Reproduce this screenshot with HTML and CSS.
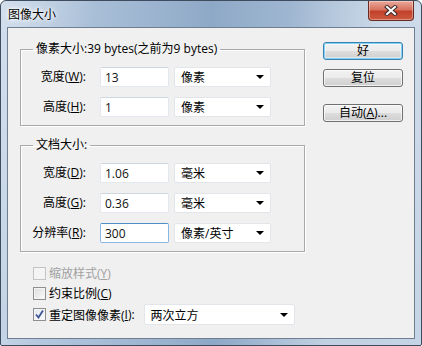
FILE: index.html
```html
<!DOCTYPE html>
<html>
<head>
  <meta charset="UTF-8">
  <link rel="stylesheet" href="styles.css">
</head>
<body>
  <div class="window">
    <div class="titlebar">
      <span class="title">图像大小</span>
      <button class="close" title="关闭">
        <svg width="14" height="11" viewBox="0 0 14 11">
          <path d="M3 2 L11 9 M11 2 L3 9" stroke="#3a2a2a" stroke-width="4" stroke-linecap="square"/>
          <path d="M3 2 L11 9 M11 2 L3 9" stroke="#fff" stroke-width="2" stroke-linecap="square"/>
        </svg>
      </button>
    </div>
    <div class="client">
      <div class="left-col">
        <fieldset class="group">
          <legend>像素大小:39 bytes(之前为9 bytes)</legend>
          <div class="rows">
            <label class="lbl">宽度(<u>W</u>):</label>
            <input class="field" type="text" value="13">
            <div class="combo"><span>像素</span><i class="arrow"></i></div>
            <label class="lbl">高度(<u>H</u>):</label>
            <input class="field" type="text" value="1">
            <div class="combo"><span>像素</span><i class="arrow"></i></div>
          </div>
        </fieldset>
        <fieldset class="group second">
          <legend>文档大小:</legend>
          <div class="rows">
            <label class="lbl">宽度(<u>D</u>):</label>
            <input class="field" type="text" value="1.06">
            <div class="combo"><span>毫米</span><i class="arrow"></i></div>
            <label class="lbl">高度(<u>G</u>):</label>
            <input class="field" type="text" value="0.36">
            <div class="combo"><span>毫米</span><i class="arrow"></i></div>
            <label class="lbl">分辨率(<u>R</u>):</label>
            <input class="field focused" type="text" value="300">
            <div class="combo"><span>像素/英寸</span><i class="arrow"></i></div>
          </div>
        </fieldset>
        <div class="options">
          <div class="opt disabled"><span class="check"></span>缩放样式(<u>Y</u>)</div>
          <div class="opt"><span class="check"></span>约束比例(<u>C</u>)</div>
          <div class="opt resample">
            <span class="check checked">
              <svg width="11" height="11" viewBox="0 0 11 11"><path d="M2 5.5 L4.5 8.5 L9 1.5" fill="none" stroke="#3b5595" stroke-width="1.8"/></svg>
            </span>重定图像像素(<u>I</u>):
            <div class="combo wide"><span>两次立方</span><i class="arrow"></i></div>
          </div>
        </div>
      </div>
      <div class="buttons">
        <button class="btn default">好</button>
        <button class="btn">复位</button>
        <button class="btn auto">自动(<u>A</u>)...</button>
      </div>
    </div>
  </div>
</body>
</html>
```

FILE: styles.css
```css
* { box-sizing: border-box; margin: 0; padding: 0; }
body {
  margin: 0;
  width: 422px;
  height: 346px;
  font-family: "Open Sans", "Noto Sans CJK SC", sans-serif;
  font-size: 12px;
  color: #000;
  background: #fff;
}
.window {
  width: 422px;
  height: 346px;
  border: 1px solid #3e4c5e;
  border-radius: 6px 6px 2px 2px;
  padding: 0 6px 6px;
  display: flex;
  flex-direction: column;
  background:
    linear-gradient(100deg, rgba(255,255,255,0.35) 0%, rgba(255,255,255,0) 20%, rgba(255,255,255,0) 60%, rgba(255,255,255,0.3) 80%, rgba(255,255,255,0.1) 100%),
    linear-gradient(90deg, #bccee3 0%, #a2b9d3 30%, #8ea9c7 50%, #a1b8d2 72%, #bfd0e4 100%);
}
.titlebar {
  height: 26px;
  display: flex;
  align-items: flex-start;
}
.title {
  padding: 6px 0 0 1px;
  line-height: 16px;
  font-size: 12px;
  text-shadow: 0 0 4px #fff, 0 0 6px #fff, 0 0 2px #fff;
}
.close {
  margin-left: auto;
  margin-right: 1px;
  width: 46px;
  height: 20px;
  border: 1px solid #6a2a22;
  border-top: none;
  border-radius: 0 0 4px 4px;
  background: linear-gradient(#e9a99c 0%, #d7735f 45%, #c3412b 55%, #cc5a3e 100%);
  box-shadow: inset 0 0 0 1px rgba(255,255,255,0.35);
  display: flex;
  align-items: center;
  justify-content: center;
  padding-bottom: 1px;
}
.client {
  flex: 1;
  border: 1px solid #6f7f91;
  background: #f0f0f0;
  display: flex;
  padding: 13px 0 0 12px;
}
.left-col {
  width: 285px;
  display: flex;
  flex-direction: column;
}
.group {
  width: 285px;
  border: 1px solid #a9a9a9;
  box-shadow: inset 1px 1px 0 #fff, 1px 1px 0 #fff;
  padding: 10px 8px 8px 8px;
  min-width: 0;
}
.group legend {
  margin-left: 4px;
  padding: 0 3px;
  line-height: 16px;
}
.group.second {
  margin-top: 11px;
}
.rows {
  display: grid;
  grid-template-columns: 57px 69px 97px;
  column-gap: 14px;
  row-gap: 10px;
  align-items: center;
}
.rows .combo {
  margin-left: -9px;
}
.lbl {
  text-align: right;
  line-height: 20px;
  white-space: nowrap;
}
u {
  text-decoration: underline;
  text-underline-offset: 1px;
}
.field {
  width: 69px;
  height: 20px;
  border: 1px solid #e2e8ee;
  border-top-color: #cfd6dd;
  border-radius: 2px;
  background: #fff;
  padding: 0 4px;
  font: inherit;
  color: #111;
  outline: none;
}
.field.focused {
  border-color: #8bb8e0;
  border-top-color: #4f8ec7;
}
.combo {
  width: 97px;
  height: 20px;
  border: 1px solid #e2e6ea;
  border-radius: 2px;
  background: #fff;
  display: flex;
  align-items: center;
  padding: 0 6px 0 6px;
  white-space: nowrap;
}
.combo span {
  flex: 1;
}
.arrow {
  width: 0;
  height: 0;
  border-top: 4px solid #000;
  border-left: 4px solid transparent;
  border-right: 4px solid transparent;
}
.options {
  margin-top: 11px;
  padding-left: 13px;
  display: flex;
  flex-direction: column;
}
.opt {
  height: 20px;
  display: flex;
  align-items: center;
  white-space: nowrap;
}
.opt.disabled {
  color: #a0a0a0;
}
.opt.resample {
  height: 21px;
  margin-top: 1px;
}
.check {
  width: 13px;
  height: 13px;
  margin-right: 3px;
  border: 1px solid #8e8f8f;
  background: linear-gradient(135deg, #dcdcdc, #fbfbfb);
  box-shadow: inset 0 0 0 1px #f4f4f4;
  display: flex;
  align-items: center;
  justify-content: center;
}
.opt.disabled .check {
  border-color: #c4c4c4;
  background: #f4f4f4;
  box-shadow: none;
}
.check.checked {
  background: linear-gradient(135deg, #e3e7ee, #fcfcfc);
}
.combo.wide {
  width: 151px;
  height: 21px;
  margin-left: 9px;
  padding-right: 6px;
}
.buttons {
  margin-left: 18px;
  padding-top: 1px;
  display: flex;
  flex-direction: column;
  gap: 9px;
}
.btn {
  width: 80px;
  height: 18px;
  border: 1px solid #707070;
  border-radius: 3px;
  background: linear-gradient(#f2f2f2 0%, #ebebeb 50%, #dddddd 51%, #cfcfcf 100%);
  box-shadow: inset 0 0 0 1px rgba(255,255,255,0.7);
  font: inherit;
  color: #000;
  line-height: 14px;
}
.btn.default {
  border-color: #3c7fb1;
  box-shadow: inset 0 0 0 1px #7fd3f5, inset 0 0 0 2px rgba(255,255,255,0.4);
}
.btn.auto {
  margin-top: 8px;
}
```
